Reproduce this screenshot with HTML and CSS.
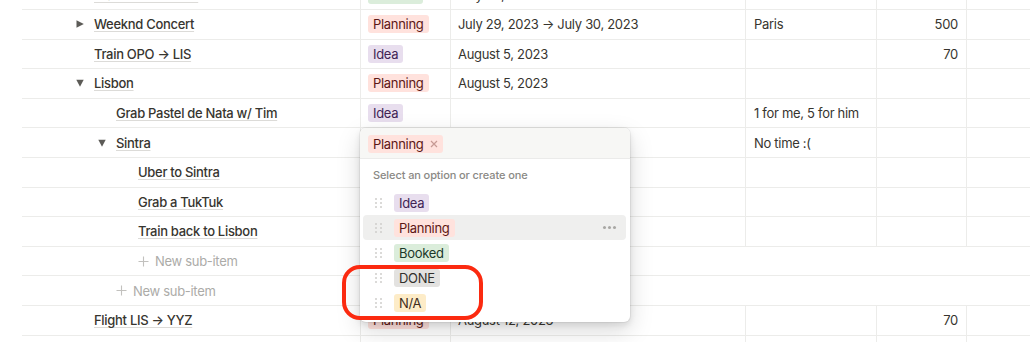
FILE: index.html
```html
<!DOCTYPE html>
<html>
<head>
<meta charset="utf-8">
<link rel="stylesheet" href="styles.css">
</head>
<body>
<div class="page">
  <div class="table">
    <div class="row">
      <div class="cell name lvl0"><span class="toggle"></span><span class="title">Train YYZ → OPO</span></div>
      <div class="cell status"><span class="tag green">Booked</span></div>
      <div class="cell date">July 22, 2023</div>
      <div class="cell notes"></div>
      <div class="cell num"></div>
      <div class="cell extra"></div>
    </div>
    <div class="row">
      <div class="cell name lvl0"><span class="toggle"><svg width="8" height="8" viewBox="0 0 8 8"><polygon points="0.5,0.3 7.8,4 0.5,7.7" class="tri"/></svg></span><span class="title">Weeknd Concert</span></div>
      <div class="cell status"><span class="tag red">Planning</span></div>
      <div class="cell date">July 29, 2023 → July 30, 2023</div>
      <div class="cell notes">Paris</div>
      <div class="cell num">500</div>
      <div class="cell extra"></div>
    </div>
    <div class="row">
      <div class="cell name lvl0"><span class="toggle"></span><span class="title">Train OPO → LIS</span></div>
      <div class="cell status"><span class="tag purple">Idea</span></div>
      <div class="cell date">August 5, 2023</div>
      <div class="cell notes"></div>
      <div class="cell num">70</div>
      <div class="cell extra"></div>
    </div>
    <div class="row">
      <div class="cell name lvl0"><span class="toggle"><svg width="8" height="8" viewBox="0 0 8 8"><polygon points="0.3,0.8 7.7,0.8 4,7.8" class="tri"/></svg></span><span class="title">Lisbon</span></div>
      <div class="cell status"><span class="tag red">Planning</span></div>
      <div class="cell date">August 5, 2023</div>
      <div class="cell notes"></div>
      <div class="cell num"></div>
      <div class="cell extra"></div>
    </div>
    <div class="row">
      <div class="cell name lvl1"><span class="toggle"></span><span class="title">Grab Pastel de Nata w/ Tim</span></div>
      <div class="cell status"><span class="tag purple">Idea</span></div>
      <div class="cell date"></div>
      <div class="cell notes">1 for me, 5 for him</div>
      <div class="cell num"></div>
      <div class="cell extra"></div>
    </div>
    <div class="row">
      <div class="cell name lvl1"><span class="toggle"><svg width="8" height="8" viewBox="0 0 8 8"><polygon points="0.3,0.8 7.7,0.8 4,7.8" class="tri"/></svg></span><span class="title">Sintra</span></div>
      <div class="cell status"><span class="tag red">Planning</span></div>
      <div class="cell date"></div>
      <div class="cell notes">No time :(</div>
      <div class="cell num"></div>
      <div class="cell extra"></div>
    </div>
    <div class="row">
      <div class="cell name lvl2"><span class="toggle"></span><span class="title">Uber to Sintra</span></div>
      <div class="cell status"></div>
      <div class="cell date"></div>
      <div class="cell notes"></div>
      <div class="cell num"></div>
      <div class="cell extra"></div>
    </div>
    <div class="row">
      <div class="cell name lvl2"><span class="toggle"></span><span class="title">Grab a TukTuk</span></div>
      <div class="cell status"></div>
      <div class="cell date"></div>
      <div class="cell notes"></div>
      <div class="cell num"></div>
      <div class="cell extra"></div>
    </div>
    <div class="row">
      <div class="cell name lvl2"><span class="toggle"></span><span class="title">Train back to Lisbon</span></div>
      <div class="cell status"></div>
      <div class="cell date"></div>
      <div class="cell notes"></div>
      <div class="cell num"></div>
      <div class="cell extra"></div>
    </div>
    <div class="row newrow nlvl2">
      <svg class="plus" width="11" height="11" viewBox="0 0 11 11"><path d="M5.5 0.5v10M0.5 5.5h10"/></svg><span>New sub-item</span>
    </div>
    <div class="row newrow nlvl1">
      <svg class="plus" width="11" height="11" viewBox="0 0 11 11"><path d="M5.5 0.5v10M0.5 5.5h10"/></svg><span>New sub-item</span>
    </div>
    <div class="row">
      <div class="cell name lvl0"><span class="toggle"></span><span class="title">Flight LIS → YYZ</span></div>
      <div class="cell status"><span class="tag red">Planning</span></div>
      <div class="cell date">August 12, 2023</div>
      <div class="cell notes"></div>
      <div class="cell num">70</div>
      <div class="cell extra"></div>
    </div>
    <div class="row">
      <div class="cell name lvl0"></div>
      <div class="cell status"></div>
      <div class="cell date"></div>
      <div class="cell notes"></div>
      <div class="cell num"></div>
      <div class="cell extra"></div>
    </div>
  </div>

  <div class="menu">
    <div class="menu-head">
      <span class="tag red">Planning<svg class="x" width="8" height="8" viewBox="0 0 8 8"><path d="M1 1L7 7M7 1L1 7"/></svg></span>
    </div>
    <div class="menu-label">Select an option or create one</div>
    <div class="options">
      <div class="opt"><span class="handle"><i></i><i></i><i></i><i></i><i></i><i></i></span><span class="tag purple">Idea</span></div>
      <div class="opt hover"><span class="handle"><i></i><i></i><i></i><i></i><i></i><i></i></span><span class="tag red">Planning</span><span class="dots"><i></i><i></i><i></i></span></div>
      <div class="opt"><span class="handle"><i></i><i></i><i></i><i></i><i></i><i></i></span><span class="tag green">Booked</span></div>
      <div class="opt"><span class="handle"><i></i><i></i><i></i><i></i><i></i><i></i></span><span class="tag gray">DONE</span></div>
      <div class="opt"><span class="handle"><i></i><i></i><i></i><i></i><i></i><i></i></span><span class="tag yellow">N/A</span></div>
    </div>
  </div>

  <div class="annot"></div>
</div>
</body>
</html>
```

FILE: styles.css
```css
html, body {
  margin: 0;
  padding: 0;
  background: #ffffff;
  overflow: hidden;
}
body {
  font-family: Inter, "Noto Sans", sans-serif;
  color: #37352f;
  font-size: 13px;
  letter-spacing: -0.3px;
}
.page {
  position: relative;
  width: 1030px;
  height: 342px;
  overflow: hidden;
}
.table {
  margin-top: -19.6px;
  padding-left: 22px;
}
.row {
  display: flex;
  height: 29.6px;
  box-sizing: border-box;
  border-bottom: 1px solid #ececea;
}
.cell {
  box-sizing: border-box;
  border-right: 1px solid #ececea;
  display: flex;
  align-items: center;
  white-space: nowrap;
  overflow: hidden;
}
.name { width: 339px; padding-left: 48px; }
.name.lvl1 { padding-left: 70px; }
.name.lvl2 { padding-left: 92px; }
.status { width: 90px; padding-left: 7px; }
.date { width: 295px; padding-left: 7px; }
.notes { width: 131px; padding-left: 8px; }
.num { width: 90px; padding-right: 8px; justify-content: flex-end; }
.extra { flex: 1; border-right: none; }

.toggle {
  width: 20px;
  height: 20px;
  margin-right: 4px;
  display: flex;
  align-items: center;
  justify-content: center;
  flex: none;
}
.tri { fill: #5c5b57; }
.title {
  font-weight: 500;
  text-decoration: underline;
  text-decoration-color: #dcdbd8;
  text-decoration-thickness: 1px;
  text-underline-offset: 2px;
  text-decoration-skip-ink: none;
}

.newrow {
  align-items: center;
  color: #acaba8;
}
.newrow.nlvl2 { padding-left: 116px; }
.newrow.nlvl1 { padding-left: 94px; }
.plus {
  margin-right: 6px;
  flex: none;
}
.plus path { stroke: #c2c1be; stroke-width: 1.1; fill: none; }

.tag {
  display: inline-flex;
  align-items: center;
  height: 18px;
  padding: 0 5px;
  border-radius: 3px;
  font-size: 13px;
  line-height: 18px;
  white-space: nowrap;
}
.tag.red { background: #ffe2dd; color: #5d1715; }
.tag.purple { background: #e8deee; color: #412454; }
.tag.green { background: #dbeddb; color: #1c3829; }
.tag.gray { background: #e3e2e0; color: #32302c; }
.tag.yellow { background: #fdecc8; color: #402c1b; }

.menu {
  position: absolute;
  left: 360px;
  top: 128px;
  width: 270px;
  height: 194px;
  background: #ffffff;
  border-radius: 6px;
  box-shadow: rgba(15,15,15,0.05) 0 0 0 1px, rgba(15,15,15,0.1) 0 3px 6px, rgba(15,15,15,0.15) 0 9px 24px;
  overflow: hidden;
}
.menu-head {
  height: 31px;
  box-sizing: border-box;
  padding: 7px 8px 0;
  background: #f7f7f5;
  border-bottom: 1px solid #ebebea;
}
.menu-head .x {
  margin-left: 6px;
}
.menu-head .x path { stroke: #c69a94; stroke-width: 1.2; fill: none; }
.menu-label {
  height: 31px;
  box-sizing: border-box;
  padding-left: 13px;
  display: flex;
  align-items: center;
  font-size: 11px;
  font-weight: 500;
  letter-spacing: -0.1px;
  color: #8a8985;
}
.options {
  padding: 0 4px 0 3px;
}
.opt {
  height: 25px;
  display: flex;
  align-items: center;
  padding-left: 12px;
  border-radius: 4px;
}
.opt.hover { background: #efefee; }
.handle {
  display: grid;
  grid-template-columns: 2px 2px;
  grid-auto-rows: 2px;
  column-gap: 3px;
  row-gap: 2px;
  margin-right: 12px;
}
.handle i {
  width: 2px;
  height: 2px;
  border-radius: 1px;
  background: #cfcecb;
}
.dots {
  margin-left: auto;
  margin-right: 10px;
  display: flex;
  gap: 2px;
}
.dots i {
  width: 3px;
  height: 3px;
  border-radius: 50%;
  background: #a8a7a4;
}
.annot {
  position: absolute;
  left: 342px;
  top: 265px;
  width: 141px;
  height: 55px;
  box-sizing: border-box;
  border: 4px solid #fb2a10;
  border-radius: 18px;
}
```
